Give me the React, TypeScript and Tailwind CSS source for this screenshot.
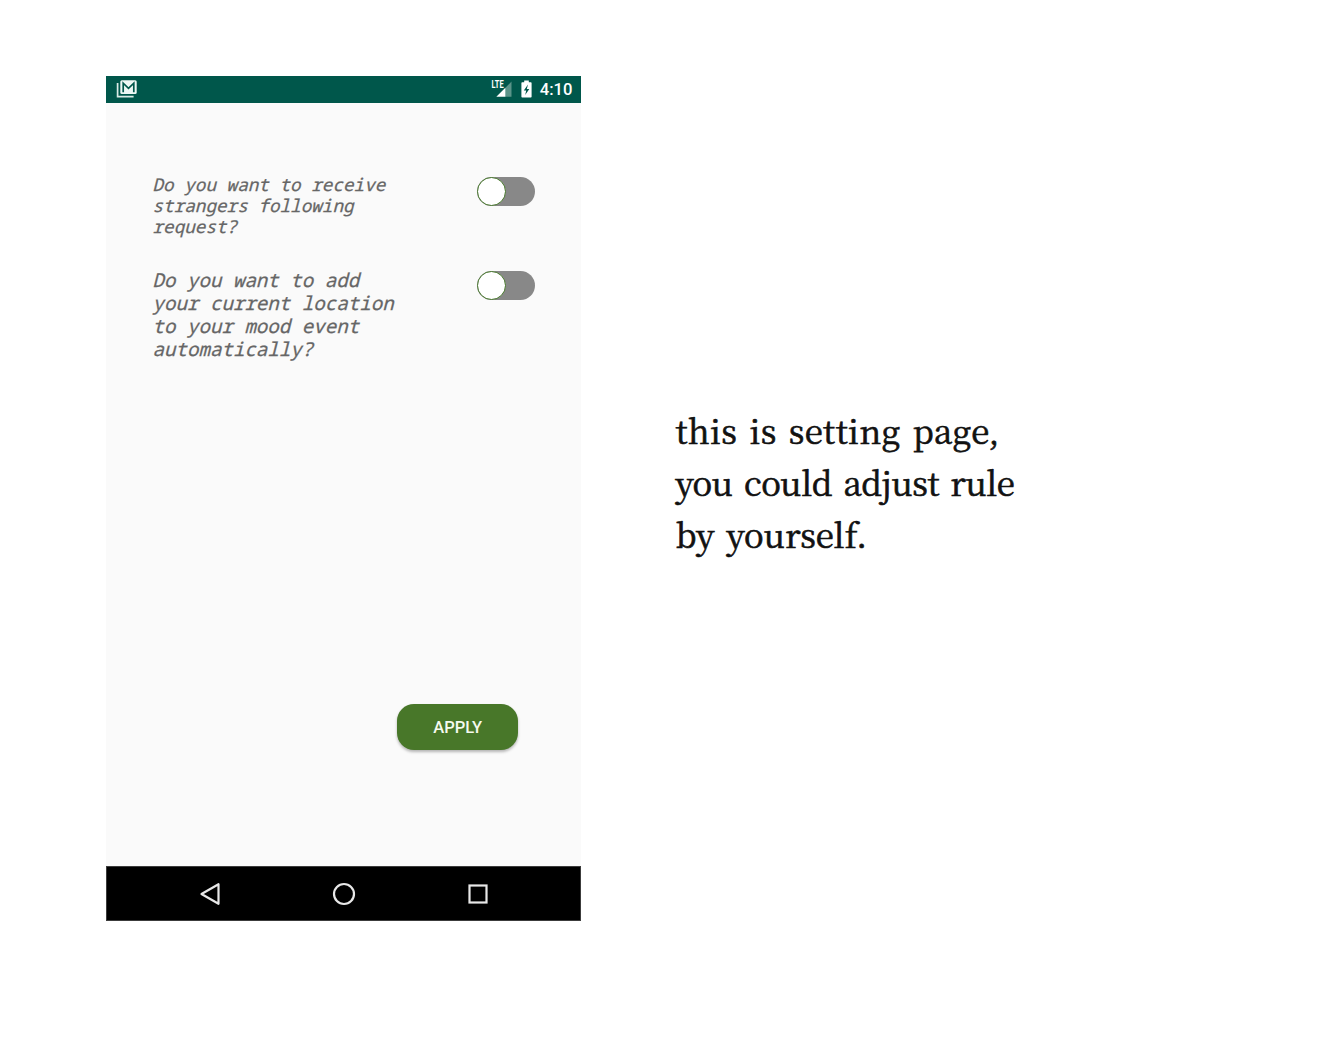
import React from 'react';

function StatusBar() {
  return (
    <header className="flex h-[27px] items-center justify-between bg-[#00574b] pl-[10px] pr-[9px] text-white">
      <svg width="22" height="20" viewBox="0 0 22 20" fill="none" aria-label="Mail">
        <path d="M1.6 4v13.6h16" stroke="#d9ebe6" strokeWidth="1.7" />
        <rect x="4.3" y="1.2" width="16.4" height="13.8" rx="1.6" fill="#eef8f5" />
        <path d="M7.2 13.2V4.2l5.3 5.1 5.3-5.1v9" stroke="#00574b" strokeWidth="1.7" />
      </svg>
      <div className="flex items-center">
        <svg width="22" height="20" viewBox="0 0 22 20" aria-label="LTE signal">
          <path d="M14 9.2 20.5 2.6v15.2H14z" fill="#5b9489" />
          <path d="M5.3 17.8 14.3 8.8v9z" fill="#fff" />
          <text x="0.6" y="9.3" fill="#fff" fontFamily="Roboto, sans-serif" fontSize="10" fontWeight="700" textLength="12" lengthAdjust="spacingAndGlyphs">LTE</text>
        </svg>
        <svg className="ml-[8px]" width="11" height="18" viewBox="0 0 11 18" aria-label="Battery charging">
          <path d="M3.2 0.5h4.6v1.8h2q.8 0 .8.8v13.6q0 .8-.8.8H1.2q-.8 0-.8-.8V3.1q0-.8.8-.8h2z" fill="#fff" />
          <path d="M7 4.6 2.8 10.4h2.4L4.2 15l4.1-5.9H5.8z" fill="#00574b" />
        </svg>
        <span className="ml-[8px] pt-[1px] font-['Roboto',sans-serif] text-[16.6px] font-medium leading-[26px]">4:10</span>
      </div>
    </header>
  );
}

function Toggle({ label }: { label: string }) {
  return (
    <button role="switch" aria-checked="false" aria-label={label} className="flex h-[29px] w-[58px] items-center rounded-full bg-[#888888]">
      <span className="size-[29px] rounded-full border-[1.5px] border-[#45752a] bg-white" />
    </button>
  );
}

export default function App() {
  return (
    <main className="flex h-[1058px] w-[1323px] items-start overflow-hidden bg-white pl-[106px] pt-[75.5px]">
      <section className="flex h-[845.5px] w-[475.4px] flex-col bg-[#fafafa]">
        <StatusBar />
        <div className="flex flex-1 flex-col pl-[46.5px] font-['Noto_Sans_Mono','DejaVu_Sans_Mono',monospace] italic text-[#666666] [-webkit-text-stroke:0.25px_#666666]">
          <div className="flex items-start justify-between pr-[46.4px] pt-[71.9px]">
            <p className="whitespace-nowrap text-[17.65px] leading-[20.7px]">
              Do you want to receive<br />strangers following<br />request?
            </p>
            <div className="pt-[2.6px]"><Toggle label="Receive follow requests" /></div>
          </div>
          <div className="mt-[32px] flex items-start justify-between pr-[46.4px]">
            <p className="whitespace-nowrap text-[19.15px] leading-[23px]">
              Do you want to add<br />your current location<br />to your mood event<br />automatically?
            </p>
            <div className="pt-[2px]"><Toggle label="Add current location" /></div>
          </div>
          <button className="mb-[116px] mr-[63px] mt-auto h-[46px] w-[121.4px] self-end rounded-[17px] bg-[#487729] pt-[2px] font-['Roboto',sans-serif] text-[16.5px] font-medium not-italic text-[#f5faef] shadow-[0_2px_3px_rgba(0,0,0,0.28)] [-webkit-text-stroke:0]">
            APPLY
          </button>
        </div>
        <nav className="flex h-[55px] items-center justify-center border border-[#3c3c3c] bg-black">
          <svg width="290" height="28" viewBox="0 0 290 28" fill="none" stroke="#e8e8e8" strokeWidth="2.2" aria-label="Back, home, overview">
            <path d="M19.5 4.2v19.6L2.5 14z" strokeLinejoin="round" />
            <circle cx="145" cy="14" r="10" />
            <rect x="270.5" y="5.5" width="17" height="17" />
          </svg>
        </nav>
      </section>
      <p className="ml-[94px] mt-[328.5px] whitespace-nowrap font-['Noto_Serif_CJK_SC','DejaVu_Serif',serif] text-[33px] font-normal leading-[52px] text-[#111111] [-webkit-text-stroke:0.7px_#111111] [word-spacing:3.5px]">
        <span className="block tracking-[0.3px]">this is setting page,</span>
        <span className="block tracking-[-0.5px]">you could adjust rule</span>
        <span className="block tracking-[0.05px]">by yourself.</span>
      </p>
    </main>
  );
}
